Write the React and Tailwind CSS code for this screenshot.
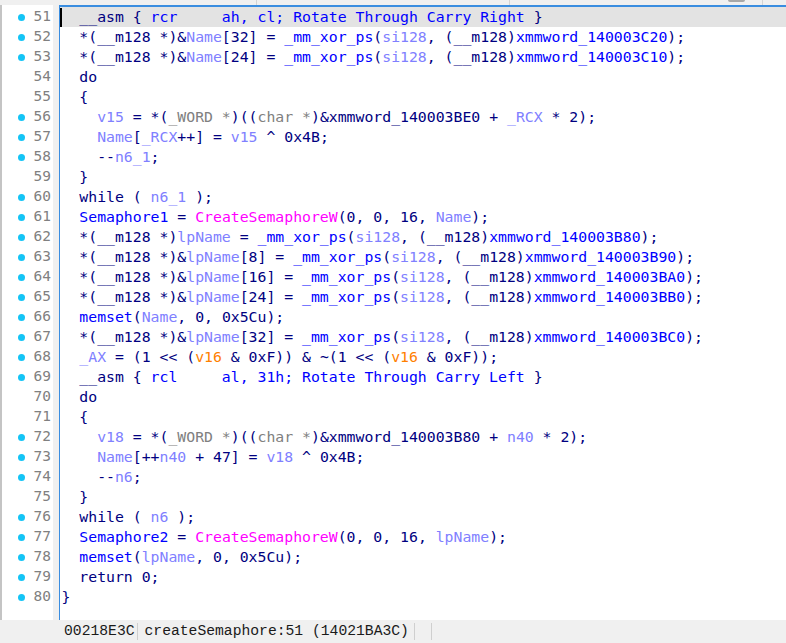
const COLORS = {
  n: 'text-[#000080]',
  b: 'text-[#0000ff]',
  v: 'text-[#8080ff]',
  g: 'text-[#808080]',
  m: 'text-[#ff00ff]',
  o: 'text-[#ff8000]',
}

const XOR = (dst, idx, g) =>
  `n:  *(__m128 *)${idx ? '&' : ''}|v:${dst}|n:${idx ? `[${idx}]` : ''} = |b:_mm_xor_ps|n:(|v:si128|n:, (__m128)|b:xmmword_${g}|n:);`

// [line number, has address dot, tokens]
const LINES = [
  [51, true, 'n:  __asm { |b:rcr     ah, cl; Rotate Through Carry Right|n: }'],
  [52, true, XOR('Name', 32, '140003C20')],
  [53, true, XOR('Name', 24, '140003C10')],
  [54, false, 'n:  do'],
  [55, false, 'n:  {'],
  [56, true, 'n:    |v:v15|n: = *(|g:_WORD *|n:)((|g:char *|n:)&xmmword_140003BE0 + |v:_RCX|n: * 2);'],
  [57, true, 'n:    |v:Name|n:[|v:_RCX|n:++] = |v:v15|n: ^ 0x4B;'],
  [58, true, 'n:    --|v:n6_1|n:;'],
  [59, false, 'n:  }'],
  [60, true, 'n:  while ( |v:n6_1|n: );'],
  [61, true, 'n:  |b:Semaphore1|n: = |m:CreateSemaphoreW|n:(0, 0, 16, |v:Name|n:);'],
  [62, true, XOR('lpName', 0, '140003B80')],
  [63, true, XOR('lpName', 8, '140003B90')],
  [64, true, XOR('lpName', 16, '140003BA0')],
  [65, true, XOR('lpName', 24, '140003BB0')],
  [66, true, 'n:  |b:memset|n:(|v:Name|n:, 0, 0x5Cu);'],
  [67, true, XOR('lpName', 32, '140003BC0')],
  [68, true, 'n:  |v:_AX|n: = (1 << (|o:v16|n: & 0xF)) & ~(1 << (|o:v16|n: & 0xF));'],
  [69, true, 'n:  __asm { |b:rcl     al, 31h; Rotate Through Carry Left|n: }'],
  [70, false, 'n:  do'],
  [71, false, 'n:  {'],
  [72, true, 'n:    |v:v18|n: = *(|g:_WORD *|n:)((|g:char *|n:)&xmmword_140003B80 + |v:n40|n: * 2);'],
  [73, true, 'n:    |v:Name|n:[++|v:n40|n: + 47] = |v:v18|n: ^ 0x4B;'],
  [74, true, 'n:    --|v:n6|n:;'],
  [75, false, 'n:  }'],
  [76, true, 'n:  while ( |v:n6|n: );'],
  [77, true, 'n:  |b:Semaphore2|n: = |m:CreateSemaphoreW|n:(0, 0, 16, |v:lpName|n:);'],
  [78, true, 'n:  |b:memset|n:(|v:lpName|n:, 0, 0x5Cu);'],
  [79, true, 'n:  return 0;'],
  [80, true, 'n:}'],
]

function Tokens({ src }) {
  return src.split('|').map((t, i) => {
    const k = t.indexOf(':')
    return (
      <span key={i} className={COLORS[t.slice(0, k)]}>{t.slice(k + 1)}</span>
    )
  })
}

export default function App() {
  return (
    <div className="w-[786px] h-[643px] flex flex-col overflow-hidden bg-[#f0f0f0] font-['DejaVu_Sans_Mono',monospace]">
      {/* leftover of the tab strip above */}
      <div className="h-[5px] flex shrink-0 bg-[#f0f0f0]">
        <div className="w-[257px] border-r border-[#d4d4d4]" />
        <div className="w-[253px] border-r border-[#d4d4d4]" />
        <div className="w-[218px]" />
        <div className="w-[17px] h-[2px] rounded-b bg-[#a8a8a8]" />
        <div className="w-[18px] border-r border-[#d4d4d4]" />
      </div>

      <div className="flex h-[615px] shrink-0">
        {/* gutter */}
        <div className="w-[59px] flex shrink-0">
          <div className="w-[2px] bg-[#c4c4c4]" />
          <div className="w-[51px] bg-white pt-[2px]">
            {LINES.map(([no, dot]) => (
              <div key={no} className="h-[20px] flex items-center">
                <div className="w-[16px]" />
                <div className={`w-[7px] h-[7px] rounded-full ${dot ? 'bg-[#14c4f6]' : ''}`} />
                <div className="flex-1 text-right pr-[2px] text-[14.5px] text-[#808080]">{no}</div>
              </div>
            ))}
          </div>
          <div className="w-[6px] bg-[#f0f0f0]" />
        </div>

        {/* pseudocode */}
        <div className="flex-1 bg-white border-l border-t-2 border-[#3a8de0] whitespace-pre text-[14.8px] leading-[20px]">
          {LINES.map(([no, , src], i) => (
            <div key={no} className={`h-[20px] flex items-center ${i === 0 ? 'bg-[#e3e3e3]' : ''}`}>
              <div className={`w-[2px] h-[19px] ${i === 0 ? 'bg-black' : ''}`} />
              <div className="-ml-[0.5px]"><Tokens src={src} /></div>
            </div>
          ))}
        </div>
      </div>

      {/* status bar */}
      <div className="h-[23px] flex items-center shrink-0 bg-[#f0f0f0] font-['Liberation_Mono',monospace] text-[14.7px] text-[#1a1a1a]">
        <div className="w-[64px]" />
        <span>00218E3C</span>
        <div className="w-[1px] h-[17px] bg-[#cfcfcf] ml-[2px] mr-[7px]" />
        <span>createSemaphore:51 (14021BA3C)</span>
        <div className="w-[1px] h-[17px] bg-[#cfcfcf] ml-[5px]" />
        <div className="w-[1px] h-[17px] bg-[#cfcfcf] ml-[16px]" />
      </div>
    </div>
  )
}
